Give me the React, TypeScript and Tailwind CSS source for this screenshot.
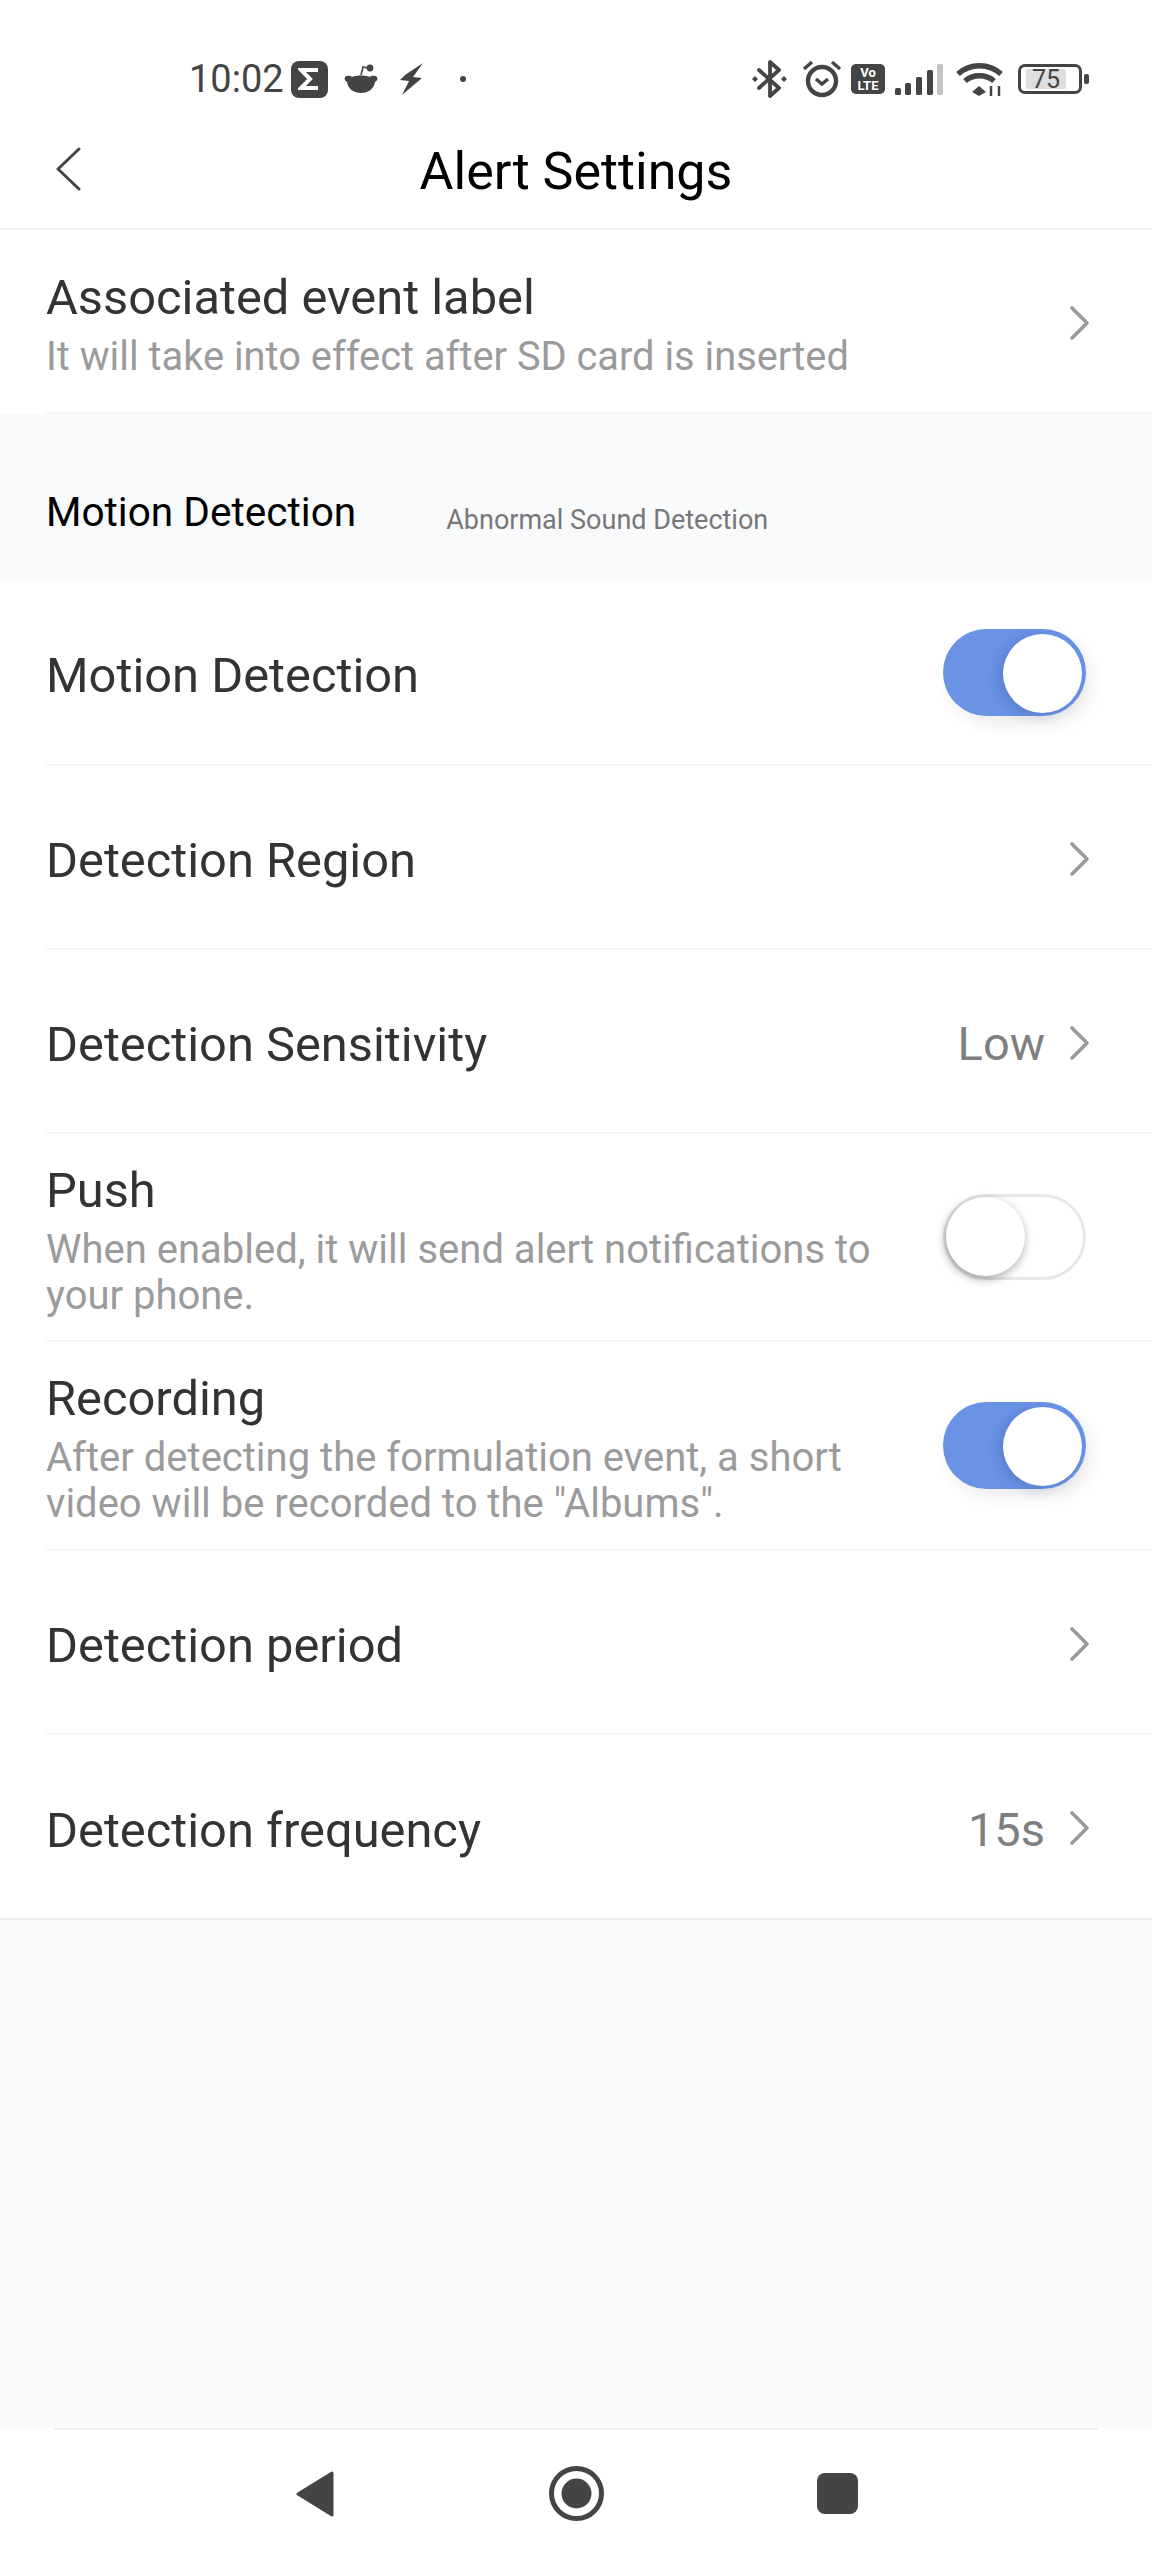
const Chevron = () => (
  <svg width="22" height="38" viewBox="0 0 22 38" fill="none" className="shrink-0 mt-[3px]">
    <path d="M3 4l15 15L3 34" stroke="#999999" strokeWidth="3.6" strokeLinecap="round" strokeLinejoin="round" />
  </svg>
);

const Toggle = ({ on }: { on: boolean }) =>
  on ? (
    <div className="relative w-[143px] h-[87px] rounded-full bg-[#6a93e6] shadow-[6px_8px_16px_rgba(0,0,0,0.08)] shrink-0">
      <div className="absolute left-[60px] top-[5px] w-[79px] h-[79px] rounded-full bg-white shadow-[-5px_3px_12px_rgba(40,60,110,0.22)]" />
    </div>
  ) : (
    <div className="relative w-[143px] h-[86px] rounded-full bg-white border-[3px] border-[#e8e8ec] shrink-0">
      <div className="absolute left-0 top-0 w-[79px] h-[79px] rounded-full bg-white shadow-[-1px_3px_10px_rgba(0,0,0,0.36)]" />
    </div>
  );

const Row = ({ title, sub, value, chevron, toggle, h = "h-[184px]", subSize = "text-[40px]" }: {
  title: string; sub?: string[]; value?: string; chevron?: boolean; toggle?: boolean; h?: string; subSize?: string;
}) => (
  <div className={`${h} ml-[46px] pr-[61px] flex items-center justify-between border-b-2 border-[#f5f5f6]`}>
    <div className="pt-[8px]">
      <div className="text-[48.8px] leading-[54px] text-[#333333]">{title}</div>
      {sub && (
        <div className="mt-[9px]">
          {sub.map(s => (
            <div key={s} className={`${subSize} leading-[46px] text-[#9b9b9b] whitespace-pre`}>{s}</div>
          ))}
        </div>
      )}
    </div>
    <div className="flex items-center gap-[24px]">
      {value && <span className="text-[47px] leading-[54px] pt-[6px] text-[#7f7f7f]">{value}</span>}
      {chevron && <Chevron />}
      {toggle !== undefined && <div className="mr-[5px]"><Toggle on={toggle} /></div>}
    </div>
  </div>
);

const StatusLeft = () => (
  <div className="flex items-center">
    <span className="text-[38px] leading-none text-[#444444]">10:02</span>
    <div className="ml-[7px] w-[37px] h-[37px] rounded-[8px] bg-[#444444] flex items-center justify-center">
      <svg width="22" height="24" viewBox="0 0 22 24" fill="none">
        <path d="M20 3H3l9 9-9 9h17" stroke="#fff" strokeWidth="4" />
      </svg>
    </div>
    <svg className="ml-[16px]" width="34" height="30" viewBox="0 0 34 30" fill="#444444">
      <path d="M1 13c3-2 6-1 7 0 5-2 13-2 18 0 1-1 4-2 7 0 1 2 0 4-2 5-1 7-7 11-14 11S4 25 3 18c-2-1-3-3-2-5z" />
      <path d="M17 11l2-8 5 1" fill="none" stroke="#444444" strokeWidth="1.6" />
      <circle cx="26" cy="4" r="3.4" />
    </svg>
    <svg className="ml-[22px]" width="23" height="32" viewBox="0 0 23 32" fill="#444444">
      <path d="M23 0L5 12l-5 5 9 1-7 14 20-17-9-1z" />
    </svg>
    <div className="ml-[37px] w-[6px] h-[6px] rounded-full bg-[#444444]" />
  </div>
);

const StatusRight = () => (
  <div className="flex items-center">
    <svg width="35" height="38" viewBox="0 0 35 38" fill="none">
      <path d="M7 10l20 18-9 8V2l9 8L7 28" stroke="#444444" strokeWidth="3.8" strokeLinejoin="round" strokeLinecap="round" />
      <path d="M0 19l3-3 3 3-3 3zM29 19l3-3 3 3-3 3z" fill="#444444" />
    </svg>
    <svg className="ml-[15px]" width="40" height="38" viewBox="0 0 40 38" fill="none" stroke="#444444">
      <circle cx="20" cy="21" r="14" strokeWidth="4.4" />
      <path d="M14 19l6 5 6-5" strokeWidth="3.4" />
      <path d="M2 9l8-7M38 9l-8-7" strokeWidth="3.4" />
    </svg>
    <div className="ml-[9px] w-[34px] h-[30px] rounded-[5px] bg-[#444444] flex flex-col items-center justify-center text-white text-[13px] leading-[13px] font-bold">
      <span>Vo</span>
      <span>LTE</span>
    </div>
    <svg className="ml-[10px]" width="48" height="31" viewBox="0 0 48 31">
      <rect x="0" y="24" width="6" height="7" rx="1.5" fill="#444444" />
      <rect x="10" y="19" width="6" height="12" rx="1.5" fill="#444444" />
      <rect x="21" y="13" width="6" height="18" rx="1.5" fill="#444444" />
      <rect x="32" y="6" width="6" height="25" rx="1.5" fill="#444444" />
      <rect x="42" y="0" width="6" height="31" rx="1.5" fill="#c4c4c4" />
    </svg>
    <svg className="ml-[13px]" width="47" height="34" viewBox="0 0 47 34" fill="none" stroke="#444444">
      <path d="M2 12c12-11 31-11 43 0" strokeWidth="5.5" />
      <path d="M9 19c8-7 21-7 29 0" strokeWidth="5.5" />
      <path d="M16 30l7-6 7 6-7 4z" fill="#444444" strokeWidth="0" />
      <path d="M35 24v10M43 24v10" strokeWidth="2.5" />
    </svg>
    <div className="ml-[15px] relative w-[64px] h-[30px] rounded-[7px] border-[3px] border-[#444444] flex items-center pl-[5px]">
      <div className="w-[40px] h-[20px] rounded-[2px] bg-[#dedede] flex items-center justify-center text-[25px] leading-none text-[#444444]">75</div>
    </div>
    <div className="ml-[2px] w-[5px] h-[10px] rounded-[2px] bg-[#444444]" />
  </div>
);

export default function App() {
  return (
    <div className="w-[1152px] h-[2560px] bg-white flex flex-col overflow-hidden font-['Roboto',sans-serif]">
      <div className="h-[230px] shrink-0 border-b-2 border-[#f3f3f4] flex flex-col">
        <div className="h-[120px] shrink-0 pt-[60px] pl-[189px] pr-[63px] flex items-start justify-between">
          <div className="h-[38px] flex items-center"><StatusLeft /></div>
          <div className="h-[38px] flex items-center"><StatusRight /></div>
        </div>
        <div className="relative flex-1 flex items-start justify-center">
          <svg className="absolute left-[55px] top-[27px]" width="26" height="44" viewBox="0 0 26 44" fill="none">
            <path d="M24 2L3 22l21 20" stroke="#444444" strokeWidth="3" strokeLinecap="round" strokeLinejoin="round" />
          </svg>
          <span className="text-[52px] leading-[60px] mt-[22px] text-black">Alert Settings</span>
        </div>
      </div>

      <Row title="Associated event label" sub={["It will take into effect after SD card is inserted"]} subSize="text-[39.8px]" chevron />

      <div className="h-[166px] shrink-0 bg-[#f9fafc] pl-[46px] pt-[73px] flex items-start">
        <span className="text-[40.6px] leading-[50px] text-black">Motion Detection</span>
        <span className="ml-[90px] mt-[13px] text-[27px] leading-[40px] text-[#777777]">Abnormal Sound Detection</span>
      </div>

      <Row title="Motion Detection" toggle h="h-[186px]" />
      <Row title="Detection Region" chevron />
      <Row title="Detection Sensitivity" value="Low" chevron />
      <Row title="Push" sub={["When enabled, it will send alert notifications to", "your phone."]} toggle={false} h="h-[208px]" />
      <Row title="Recording" sub={["After detecting the formulation event, a short", "video will be recorded to the \"Albums\"."]} toggle h="h-[209px]" />
      <Row title="Detection period" chevron />
      <div className="h-[185px] shrink-0 border-b-2 border-[#ececee] pl-[46px] pr-[61px] flex items-center justify-between">
        <div className="pt-[8px] text-[48.8px] leading-[54px] text-[#333333]">Detection frequency</div>
        <div className="flex items-center gap-[24px]">
          <span className="text-[47px] leading-[54px] pt-[6px] text-[#7f7f7f]">15s</span>
          <Chevron />
        </div>
      </div>

      <div className="flex-1 bg-[#f9fafc]" />

      <div className="h-[132px] shrink-0 bg-white">
        <div className="mx-[54px] h-[2px] bg-[#eeeef0]" />
        <div className="pt-[36px] flex items-center">
          <svg className="ml-[296px]" width="38" height="46" viewBox="0 0 38 46" fill="#444444" stroke="#444444" strokeWidth="3" strokeLinejoin="round">
            <path d="M36 2v42L2 23z" />
          </svg>
          <svg className="ml-[215px]" width="55" height="55" viewBox="0 0 55 55" fill="none">
            <circle cx="27.5" cy="27.5" r="25" stroke="#444444" strokeWidth="5" />
            <circle cx="27.5" cy="27.5" r="15" fill="#444444" />
          </svg>
          <div className="ml-[213px] w-[41px] h-[41px] rounded-[8px] bg-[#444444]" />
        </div>
      </div>
    </div>
  );
}
